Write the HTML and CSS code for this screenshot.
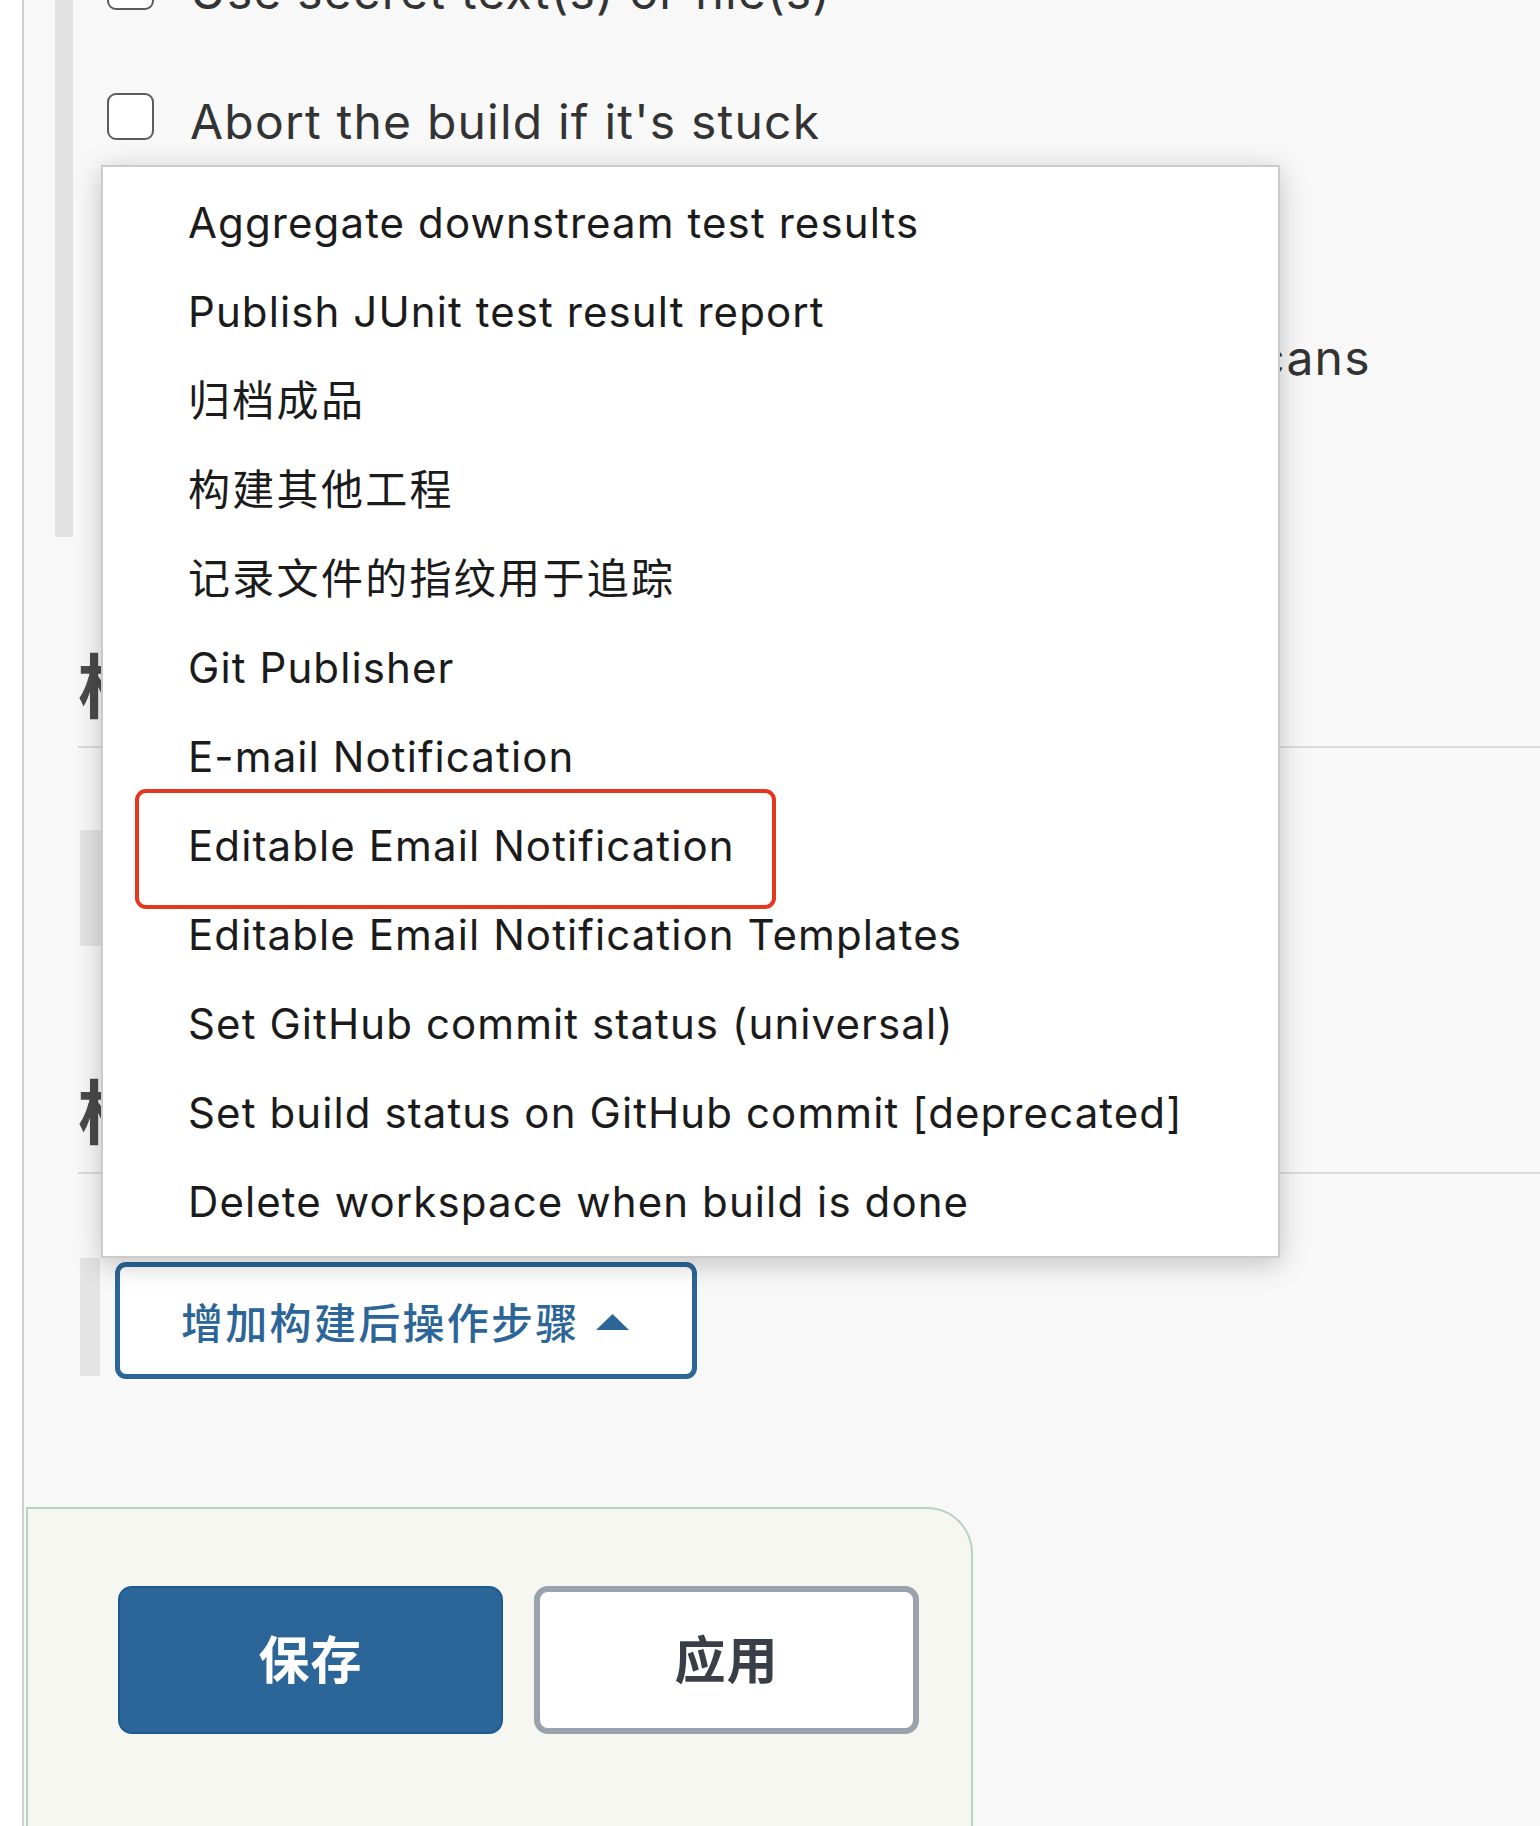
FILE: index.html
```html
<!DOCTYPE html>
<html lang="zh-CN">
<head>
<meta charset="utf-8">
<title>Jenkins configure</title>
<link rel="stylesheet" href="styles.css">
</head>
<body>
<div class="page">
  <aside class="side"></aside>
  <main class="main">
    <section class="env">
      <div class="row">
        <span class="checkbox"></span>
        <span class="label">Use secret text(s) or file(s)</span>
      </div>
      <div class="row">
        <span class="checkbox"></span>
        <span class="label">Abort the build if it's stuck</span>
      </div>
      <div class="row row-tight">
        <span class="checkbox"></span>
        <span class="label">Add timestamps to the Console Output</span>
      </div>
      <div class="row row-tight">
        <span class="checkbox"></span>
        <span class="label">Inspect build log for published Gradle build scans</span>
      </div>
    </section>

    <h2 class="heading">构建</h2>
    <div class="steps">
      <button class="add-btn">增加构建步骤</button>
    </div>

    <h2 class="heading heading-2">构建后操作</h2>
    <div class="steps steps-post">
      <button class="add-btn add-post">
        <span>增加构建后操作步骤</span>
        <svg class="caret" width="33" height="16" viewBox="0 0 33 16"><polygon points="16.5,0 33,16 0,16" fill="#2c6598"/></svg>
      </button>
    </div>

    <footer class="bottom-bar">
      <button class="btn btn-save">保存</button>
      <button class="btn btn-apply">应用</button>
    </footer>
  </main>

  <ul class="menu">
    <li>Aggregate downstream test results</li>
    <li>Publish JUnit test result report</li>
    <li class="cjk">归档成品</li>
    <li class="cjk">构建其他工程</li>
    <li class="cjk">记录文件的指纹用于追踪</li>
    <li>Git Publisher</li>
    <li>E-mail Notification</li>
    <li>Editable Email Notification</li>
    <li>Editable Email Notification Templates</li>
    <li>Set GitHub commit status (universal)</li>
    <li>Set build status on GitHub commit [deprecated]</li>
    <li>Delete workspace when build is done</li>
  </ul>
  <div class="highlight"></div>
</div>
</body>
</html>
```

FILE: styles.css
```css
html, body {
  margin: 0;
  padding: 0;
  width: 1540px;
  height: 1826px;
  overflow: hidden;
  background: #f8f8f8;
  font-family: "Inter", "Noto Sans CJK SC", sans-serif;
  color: #333;
}

.page {
  position: relative;
  display: flex;
  width: 1540px;
  height: 1826px;
  overflow: hidden;
}

.side {
  flex: 0 0 22px;
  background: #ffffff;
  border-right: 2px solid #cfcfcf;
}

.main {
  flex: 1;
  display: flex;
  flex-direction: column;
  min-width: 0;
}

/* Build environment options */
.env {
  margin: -74px 0 0 31px;
  border-left: 18px solid #e2e2e2;
  padding: 0 0 127px 34px;
}

.row {
  display: flex;
  align-items: center;
  height: 120px;
  gap: 36px;
}

.row:first-child {
  margin-bottom: 10px;
}

.row-tight {
  height: 117px;
}

.checkbox {
  flex: 0 0 auto;
  width: 43px;
  height: 43px;
  border: 2px solid #5c5c5c;
  border-radius: 9px;
  background: #fff;
}

.label {
  font-size: 48px;
  line-height: 1;
  padding-top: 12px;
  letter-spacing: 1.2px;
  color: #333;
  white-space: nowrap;
}

/* Section headings */
.heading {
  margin: 109px 0 0 54px;
  font-size: 70px;
  line-height: 84px;
  font-weight: 700;
  color: #4a4a4a;
  padding-bottom: 16px;
  border-bottom: 2px solid #dcdcdc;
}

.heading-2 {
  margin-top: 126px;
}

.steps {
  margin: 82px 0 0 56px;
  border-left: 22px solid #e4e4e4;
  height: 120px;
  padding-left: 15px;
}

.steps-post {
  margin-top: 84px;
  border-left-width: 20px;
  height: 118px;
}

.add-btn {
  font-family: "Inter", "Noto Sans CJK SC", sans-serif;
  background: #fff;
  border: 5px solid #2c6598;
  border-radius: 11px;
  color: #2c6598;
  font-size: 42px;
  font-weight: 500;
  letter-spacing: 2.3px;
  height: 116px;
  padding: 0 40px;
}

.add-post {
  display: flex;
  align-items: center;
  gap: 16px;
  width: 582px;
  height: 117px;
  margin-top: 4px;
  padding: 0 0 0 61px;
}

.caret {
  margin-top: 2px;
}

/* Bottom app bar */
.bottom-bar {
  margin: 131px 0 0 2px;
  width: 947px;
  height: 400px;
  box-sizing: border-box;
  background: #f6f7f0;
  border: 2px solid #b9d2c3;
  border-bottom: none;
  border-radius: 0 46px 0 0;
  padding: 77px 0 0 90px;
  display: flex;
  align-items: flex-start;
  gap: 31px;
}

.btn {
  font-family: "Inter", "Noto Sans CJK SC", sans-serif;
  width: 385px;
  height: 148px;
  border-radius: 14px;
  font-size: 51px;
  font-weight: 700;
  letter-spacing: 1px;
  padding: 0 0 6px 0;
  cursor: pointer;
}

.btn-save {
  background: #2c6699;
  border: 2px solid #1d5a93;
  color: #ffffff;
}

.btn-apply {
  background: #ffffff;
  border: 6px solid #9aa3ad;
  color: #3a3f47;
}

/* Dropdown menu overlay */
.menu {
  position: absolute;
  left: 101px;
  top: 165px;
  width: 1179px;
  height: 1093px;
  box-sizing: border-box;
  margin: 0;
  padding: 11px 0 0 0;
  list-style: none;
  background: #ffffff;
  border: 2px solid #cbcbcb;
  box-shadow: 0 6px 26px rgba(0, 0, 0, 0.22);
}

.menu li {
  height: 89px;
  line-height: 89px;
  padding-left: 85px;
  font-size: 42px;
  letter-spacing: 1.1px;
  color: #1b1b1b;
  white-space: nowrap;
}

.menu li.cjk {
  letter-spacing: 2.3px;
}

/* Annotation box */
.highlight {
  position: absolute;
  left: 135px;
  top: 789px;
  width: 641px;
  height: 120px;
  box-sizing: border-box;
  border: 4px solid #e5361f;
  border-radius: 11px;
}
```
